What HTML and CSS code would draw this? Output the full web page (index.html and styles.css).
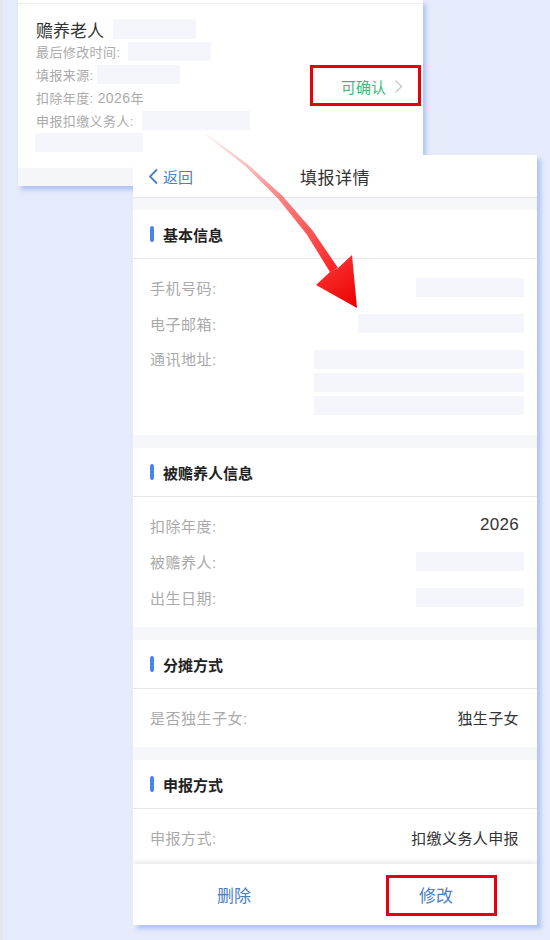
FILE: index.html
```html
<!DOCTYPE html>
<html lang="zh-CN">
<head>
<meta charset="utf-8">
<title>填报详情</title>
<link rel="stylesheet" href="styles.css">
</head>
<body>
<div class="stage">
  <div class="card1">
    <div class="card1-top"></div>
    <div class="card1-main">
      <div class="c1-info">
        <div class="c1-title"><span>赡养老人</span><i class="ph w83 h20"></i></div>
        <div class="c1-row"><span>最后修改时间:</span><i class="ph w83 gap10"></i></div>
        <div class="c1-row"><span>填报来源:</span><i class="ph w83 gap5"></i></div>
        <div class="c1-row"><span>扣除年度: <span class="num-s">2026</span>年</span></div>
        <div class="c1-row"><span>申报扣缴义务人:</span><i class="ph w108 gap10"></i></div>
        <i class="ph w108 lone"></i>
      </div>
      <div class="confirm">
        <span>可确认</span>
        <svg width="9" height="15" viewBox="0 0 9 15"><path d="M1.5 1.5 L7.5 7.5 L1.5 13.5" fill="none" stroke="#c8c8c8" stroke-width="1.4"/></svg>
      </div>
    </div>
    <div class="card1-foot"></div>
  </div>

  <div class="panel">
    <div class="nav">
      <div class="back">
        <svg width="11" height="17" viewBox="0 0 11 17"><path d="M9 1.5 L2 8.5 L9 15.5" fill="none" stroke="#4a7fc5" stroke-width="1.8"/></svg>
        <span>返回</span>
      </div>
      <div class="nav-title">填报详情</div>
      <div></div>
    </div>
    <div class="content">
      <div class="section">
        <div class="sec-head">基本信息</div>
        <div class="sec-body">
          <div class="row"><span class="label">手机号码:</span><i class="ph w108"></i></div>
          <div class="row"><span class="label">电子邮箱:</span><i class="ph w166"></i></div>
          <div class="row row-top"><span class="label">通讯地址:</span>
            <div class="stack"><i class="ph w210"></i><i class="ph w210"></i><i class="ph w210"></i></div>
          </div>
        </div>
      </div>
      <div class="section">
        <div class="sec-head">被赡养人信息</div>
        <div class="sec-body">
          <div class="row"><span class="label">扣除年度:</span><span class="value num">2026</span></div>
          <div class="row"><span class="label">被赡养人:</span><i class="ph w108"></i></div>
          <div class="row"><span class="label">出生日期:</span><i class="ph w108"></i></div>
        </div>
      </div>
      <div class="section">
        <div class="sec-head">分摊方式</div>
        <div class="sec-body">
          <div class="row"><span class="label">是否独生子女:</span><span class="value">独生子女</span></div>
        </div>
      </div>
      <div class="section">
        <div class="sec-head">申报方式</div>
        <div class="sec-body">
          <div class="row"><span class="label">申报方式:</span><span class="value">扣缴义务人申报</span></div>
        </div>
      </div>
    </div>
    <div class="footer">
      <span>删除</span>
      <span>修改</span>
    </div>
  </div>

  <svg class="arrow" width="550" height="940" viewBox="0 0 550 940">
    <defs>
      <linearGradient id="shaft" gradientUnits="userSpaceOnUse" x1="207" y1="135" x2="340" y2="270">
        <stop offset="0" stop-color="#f6c4c4" stop-opacity="0.35"/>
        <stop offset="0.45" stop-color="#f77a7a" stop-opacity="0.85"/>
        <stop offset="1" stop-color="#ff1e1e"/>
      </linearGradient>
      <linearGradient id="head" gradientUnits="userSpaceOnUse" x1="320" y1="255" x2="357" y2="308">
        <stop offset="0" stop-color="#ff3a3a"/>
        <stop offset="1" stop-color="#e80000"/>
      </linearGradient>
    </defs>
    <path d="M207.3,134.6 L247.0,163.7 L282.1,195.5 L312.4,230.2 L337.9,267.8 L330.1,272.2 L306.8,234.4 L278.4,199.0 L245.1,165.9 L206.7,135.4 Z" fill="url(#shaft)"/>
    <path d="M337.5,268.5 L352,255 L357,308 L316,285 L330.5,271.5 Z" fill="url(#head)"/>
  </svg>

  <div class="mark mark1"></div>
  <div class="mark mark2"></div>
</div>
</body>
</html>
```
FILE: styles.css
```css
* { box-sizing: border-box; }

body {
  margin: 0;
  width: 550px;
  height: 940px;
  overflow: hidden;
  font-family: "Liberation Sans", "Noto Sans CJK SC", sans-serif;
  background: linear-gradient(to right, #e3e6ef 0 3px, #e6ebfb 3px);
}

.stage {
  position: relative;
  width: 550px;
  height: 940px;
}

i { font-style: normal; }

.ph {
  display: block;
  height: 19px;
  background: #f4f6fb;
  flex: none;
}
.h20 { height: 20px; }
.w83 { width: 83px; }
.w108 { width: 108px; }
.w166 { width: 166px; }
.w210 { width: 210px; }
.gap10 { margin-left: 8px; }
.gap5 { margin-left: 3px; }

/* top card */
.card1 {
  position: absolute;
  left: 18px;
  top: 0;
  width: 405px;
  height: 186px;
  background: #fff;
  box-shadow: 3px 4px 4px rgba(125, 160, 240, 0.5);
  display: flex;
  flex-direction: column;
}
.card1-top {
  height: 4px;
  border-bottom: 1px solid #eeeeee;
}
.card1-main {
  flex: 1;
  display: flex;
  padding: 14px 20px 0 18px;
}
.card1-foot {
  height: 18px;
  background: #f5f6f9;
}
.c1-info {
  display: flex;
  flex-direction: column;
}
.c1-title {
  display: flex;
  align-items: center;
  gap: 9px;
  height: 22px;
  font-size: 17px;
  color: #333;
}
.c1-row {
  display: flex;
  align-items: center;
  height: 23px;
  font-size: 13px;
  letter-spacing: 0.4px;
  color: #aaaaaa;
}
.num-s { font-size: 14px; }
.lone { margin-left: -1px; margin-top: 1px; }

.confirm {
  margin-left: auto;
  align-self: center;
  margin-top: -14px;
  display: flex;
  align-items: center;
  gap: 8px;
  font-size: 15px;
  color: #3dba7a;
}

/* detail panel */
.panel {
  position: absolute;
  left: 133px;
  top: 155px;
  width: 404px;
  height: 770px;
  background: #f5f7fa;
  box-shadow: 4px 4px 4px rgba(125, 160, 240, 0.5);
  display: flex;
  flex-direction: column;
  overflow: hidden;
}
.nav {
  height: 43px;
  flex: none;
  background: #fff;
  border-bottom: 1px solid #e6e6e6;
  display: grid;
  grid-template-columns: 1fr auto 1fr;
  align-items: center;
}
.back {
  display: flex;
  align-items: center;
  gap: 4px;
  padding-left: 15px;
  font-size: 15px;
  color: #4a7fc5;
}
.nav-title {
  font-size: 17px;
  letter-spacing: 0.5px;
  color: #333;
}
.content {
  flex: 1;
  overflow: hidden;
  display: flex;
  flex-direction: column;
  gap: 13px;
  padding-top: 12px;
}
.section {
  background: #fff;
  flex: none;
}
.sec-head {
  height: 49px;
  display: flex;
  align-items: center;
  gap: 9px;
  padding-left: 17px;
  border-bottom: 1px solid #e8e8e8;
  font-size: 15px;
  font-weight: bold;
  color: #222;
}
.sec-head::before {
  content: "";
  width: 4px;
  height: 16px;
  border-radius: 2px;
  background: #4a86e8;
}
.sec-body {
  padding: 10px 13px 12px 17px;
}
.row {
  display: flex;
  justify-content: space-between;
  align-items: center;
  height: 36px;
  font-size: 15px;
}
.row-top {
  align-items: flex-start;
  height: auto;
  padding: 9px 0 8px;
}
.row-top .label { line-height: 20px; }
.label {
  color: #aaaaaa;
  letter-spacing: 0.5px;
}
.value {
  color: #333;
  font-size: 15px;
  letter-spacing: 0.4px;
  padding-right: 5px;
}
.num {
  font-size: 17px;
  letter-spacing: 0.3px;
}
.stack {
  display: flex;
  flex-direction: column;
  gap: 4px;
}

.footer {
  position: relative;
  height: 61px;
  flex: none;
  background: #fff;
  display: flex;
  box-shadow: 0 -3px 5px rgba(0, 0, 0, 0.08);
}
.footer span {
  flex: 1;
  display: flex;
  align-items: center;
  justify-content: center;
  font-size: 17px;
  color: #4a7fc5;
}

/* annotations */
.arrow {
  position: absolute;
  left: 0;
  top: 0;
  pointer-events: none;
}
.mark {
  position: absolute;
  border: 3px solid #e8000b;
}
.mark1 {
  left: 310px;
  top: 65px;
  width: 111px;
  height: 41px;
}
.mark2 {
  left: 386px;
  top: 875px;
  width: 111px;
  height: 41px;
}
```
